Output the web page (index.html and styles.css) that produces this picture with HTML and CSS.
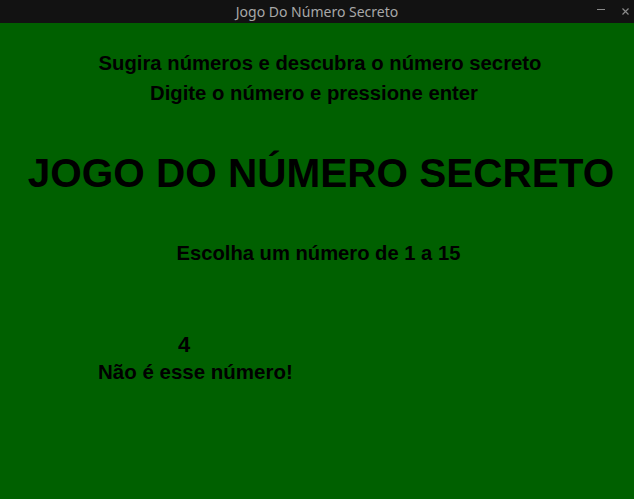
FILE: index.html
```html
<!DOCTYPE html>
<html lang="pt">
<head>
<meta charset="utf-8">
<title>Jogo Do Número Secreto</title>
<link rel="stylesheet" href="styles.css">
</head>
<body>
<div class="window">
  <header class="titlebar">
    <span class="title">Jogo Do Número Secreto</span>
    <div class="controls">
      <svg class="ctl-min" width="8" height="2" viewBox="0 0 8 2"><rect x="0" y="0" width="8" height="1" fill="#8a8a8a"/></svg>
      <svg class="ctl-close" width="7" height="7" viewBox="0 0 7 7"><path d="M0.5 0.5 L6.5 6.5 M6.5 0.5 L0.5 6.5" stroke="#8a8a8a" stroke-width="1.2"/></svg>
    </div>
  </header>
  <main class="content">
    <p class="hint first">Sugira números e descubra o número secreto</p>
    <p class="hint second">Digite o número e pressione enter</p>
    <h1 class="heading">JOGO DO NÚMERO SECRETO</h1>
    <p class="prompt">Escolha um número de 1 a 15</p>
    <div class="guess">4</div>
    <div class="result">Não é esse número!</div>
  </main>
</div>
</body>
</html>
```

FILE: styles.css
```css
html, body {
  margin: 0;
  padding: 0;
  height: 100%;
}
body {
  background: #006000;
  font-family: "Liberation Sans", Arial, sans-serif;
  color: #000;
}
.window {
  display: flex;
  flex-direction: column;
  height: 499px;
}
.titlebar {
  height: 23px;
  background: #121212;
  position: relative;
  display: flex;
  align-items: center;
  justify-content: center;
  flex-shrink: 0;
}
.title {
  font-family: "Noto Sans", sans-serif;
  font-size: 14px;
  color: #a8a8a8;
}
.controls {
  position: absolute;
  right: 5px;
  top: 0;
  height: 23px;
  display: flex;
  align-items: center;
  gap: 17px;
}
.ctl-min {
  display: block;
  margin-top: -3px;
}
.ctl-close {
  display: block;
  margin-top: 0;
}
.content {
  flex: 1;
  background: #006000;
  font-weight: bold;
}
.hint {
  margin: 0;
  font-size: 20.3px;
  line-height: 30px;
  text-align: center;
}
.hint.first {
  margin-top: 25px;
  padding-left: 6px;
}
.hint.second {
  padding-right: 6px;
}
.heading {
  margin: 41px 0 0 0;
  font-size: 40.5px;
  line-height: 48px;
  text-align: center;
  padding-left: 8px;
}
.prompt {
  margin: 41px 0 0 0;
  font-size: 20.2px;
  line-height: 30px;
  text-align: center;
  padding-left: 3px;
}
.guess {
  margin-top: 65px;
  padding-left: 178px;
  font-size: 22px;
  line-height: 24px;
}
.result {
  margin-top: 2px;
  padding-left: 98px;
  font-size: 20.5px;
  line-height: 26px;
}
```
